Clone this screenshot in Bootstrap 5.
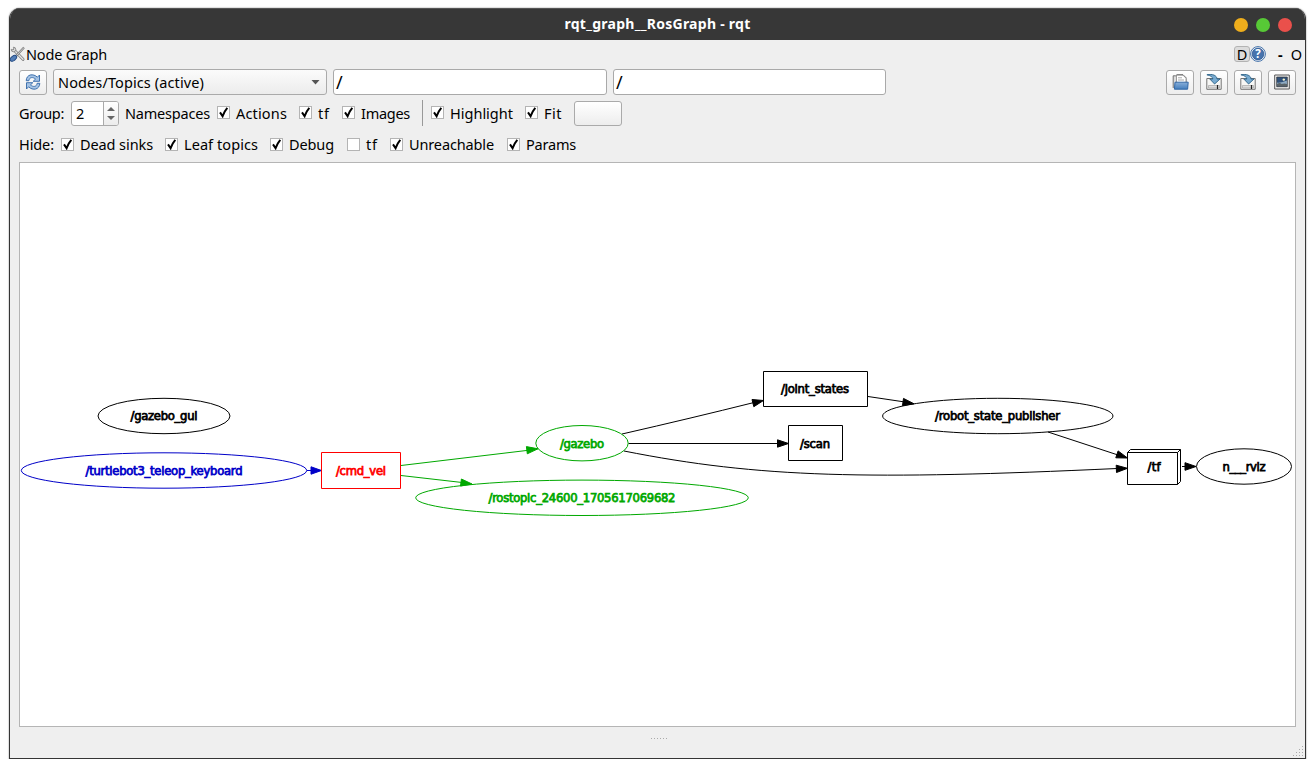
<!DOCTYPE html>
<html lang="en">
<head>
<meta charset="utf-8">
<title>rqt_graph__RosGraph - rqt</title>
<link href="https://cdn.jsdelivr.net/npm/bootstrap@5.3.0/dist/css/bootstrap.min.css" rel="stylesheet">
<style>
body{background:#fff;overflow:hidden;font-family:"Noto Sans",sans-serif;font-size:14.5px;line-height:20px;color:#000}
.window{width:1297px;height:751px;margin:8px 0 0 9px;background:#efefef;border:1px solid #353535;border-top:0;border-radius:11px 11px 0 0;box-shadow:0 0 1px 1px #ddd;overflow:hidden}
.titlebar{height:32px;background:#373737;border-top:1px solid #555;color:#fff;font-weight:700;font-size:14px;padding:0 13px}
.titlebar .side{width:58px}
.titlebar .fit{margin-bottom:2px}
.dot{width:14px;height:14px;border-radius:50%}
.dockbar{height:29px;padding:0 3px 2px 0}
.tools{height:26px;padding:0 9px;gap:6px}
.filters{height:26px;padding-left:9px;margin-top:5px}
.filters .tick{padding-bottom:1px}
.hides{height:26px;padding-left:9px;margin-top:5px}
.qbtn{height:25px;width:28px;padding:0;border:1px solid #aaa;border-radius:3px;background:linear-gradient(#fff,#ededed)}
.qfield{height:26px;border:1px solid #a9a9a9;border-radius:3px;padding:0 2px;background:#fff;font-size:18px}
.qselect{width:274px;height:26px;border:1px solid #aaa;border-radius:3px;background:linear-gradient(#fbfbfb,#ececec);padding:0 6px 0 4px}
.spin{width:48px;height:25px;border:1px solid #aaa;border-radius:3px;background:#fff;overflow:hidden;padding-left:4px}
.spin .arrows{width:15px;height:100%;border-left:1px solid #aaa;background:linear-gradient(#fff,#ececec)}
.tick{gap:6px}
.tick i{width:13px;height:13px;border:1px solid #b4b4b4;background:#fff;display:flex;flex:none}
.fit{white-space:nowrap;display:inline-block}
.divider{width:1px;height:26px;background:#999}
.canvas{width:1277px;height:565px;border:1px solid #b5b5b5;background:#fff;margin:5px 0 0 9px}
.canvas text{font-family:"DejaVu Sans",sans-serif;font-size:11.6px;text-anchor:middle;stroke-width:.75px}
.foot{height:31px}
</style>
</head>
<body>
<svg width="0" height="0" class="position-absolute">
<defs>
<path id="check" d="M2 5.4 4.6 9.2 Q6.5 4 9.3 .8" fill="none" stroke="#000" stroke-width="2"/>
<linearGradient id="blue" x2="0" y2="1"><stop stop-color="#89afd9"/><stop offset="1" stop-color="#447ebd"/></linearGradient>
<g id="save"><path d="M.8 4.5h14.4v10.8H.8z" fill="#f7f7f5" stroke="#747474"/><path d="M2.5 11.5h11v2.5h-11z" fill="#ddd" stroke="#999" stroke-width=".6"/><path d="M11.5 11v4" stroke="#222" stroke-width="1.2"/><path d="M.9.8C6.6-.5 11 1.6 11 5h3L8.6 10 3.8 5h3C6.8 3 4.4 1.5.9.8Z" fill="#76a9cf" stroke="#2d6389" stroke-width=".9"/></g>
</defs>
</svg>
<main class="window">
<header class="titlebar d-flex align-items-center justify-content-between">
<span class="side"></span><span class="fit" data-w="186">rqt_graph__RosGraph - rqt</span>
<span class="side d-flex gap-2"><i class="dot" style="background:#efae1c"></i><i class="dot" style="background:#57c936"></i><i class="dot" style="background:#ea504b"></i></span>
</header>
<section class="dockbar d-flex align-items-center">
<svg width="16" height="16" viewBox="0 0 16 16"><path d="M4 4 13 13.3" stroke="#808080" stroke-width="3" stroke-linecap="round"/><path d="M4 4 13 13.3" stroke="#e3e3e3" stroke-width="1.4" stroke-linecap="round"/><path d="M3.3 1.2A2.3 2.3 0 1 1 1.2 3.3L3 4 4 3Z" fill="#ddd" stroke="#888" stroke-width=".9"/><path d="M14 1.5 6 10" stroke="#777" stroke-width="2.1"/><path d="M14 1.5 6 10" stroke="#ddd" stroke-width=".9"/><ellipse cx="3.4" cy="12.3" rx="3.8" ry="2.2" transform="rotate(-38 3.4 12.3)" fill="#547fb8" stroke="#234a82"/></svg>
<span class="fit" data-w="81">Node Graph</span>
<span class="ms-auto d-flex align-items-center"><b class="fw-normal d-flex align-items-center justify-content-center" style="width:16px;height:16px;background:#dcdcdc;border:1px solid #b3b3b3;border-radius:3px">D</b>
<svg width="16" height="16" viewBox="0 0 16 16"><circle cx="8" cy="8" r="7.4" fill="#fff" stroke="#416fa7"/><circle cx="8" cy="8" r="5.9" fill="#4773ad" stroke="#214f8c" stroke-width=".7"/><text x="8" y="12" text-anchor="middle" font-size="11.5" font-weight="700" fill="#fff">?</text></svg>
<span style="margin-left:12px;font-weight:700">-</span><span style="margin-left:8px">O</span></span>
</section>
<section class="tools d-flex align-items-center">
<button class="qbtn d-flex align-items-center justify-content-center"><svg width="16" height="16" viewBox="0 0 16 16"><g id="turn" fill="#a5c3e5" stroke="#3167a7" stroke-width=".9"><path d="M1.2 6.7C1.5.1 8.3-.8 12.4 3.2L14.5 1v6.3H8.2l2.3-2.2C7.8 2.7 4.4 3 3.9 6.7Z"/></g><use href="#turn" transform="rotate(180 8 8)"/></svg></button>
<div class="qselect d-flex align-items-center justify-content-between"><span class="fit" data-w="146">Nodes/Topics (active)</span><svg width="9" height="5"><path d="M.5 0h8L4.5 4.5Z" fill="#555"/></svg></div>
<div class="qfield d-flex align-items-center" style="width:274px">/</div>
<div class="qfield d-flex align-items-center" style="width:273px">/</div>
<div class="d-flex ms-auto" style="gap:6px">
<button class="qbtn d-flex align-items-center justify-content-center"><svg width="17" height="16" viewBox="0 0 17 16"><path d="M1.2 14V1.8h2.6L5 .7h6l3 3V10" fill="#ddd" stroke="#737373"/><path d="M4.5 1.2h6.5l3 3V10H4.5z" fill="#fff" stroke="#777" stroke-width=".7"/><path d="M6 3.8h4M6 6h6" stroke="#aaa"/><path d="M3 8.2h13.2l-.6 7H2.4Z" fill="url(#blue)" stroke="#3267a6"/></svg></button>
<button class="qbtn d-flex align-items-center justify-content-center"><svg width="16" height="16"><use href="#save"/></svg></button>
<button class="qbtn d-flex align-items-center justify-content-center"><svg width="16" height="16"><use href="#save"/></svg></button>
<button class="qbtn d-flex align-items-center justify-content-center"><svg width="16" height="16" viewBox="0 0 16 16"><path d="M.7 1h14.6v14H.7z" fill="#f3f3f3" stroke="#555"/><path d="M2.7 3h10.6v9.7H2.7z" fill="#2f5079" stroke="#333" stroke-width=".7"/><path d="M3.1 8.6Q8 9 12.9 6.6v3.6H3.1z" fill="#8eabc4"/><path d="M3.1 10q2.5-2 4.5 0 3-1 5.3 0v2.3H3.1z" fill="#5b6468"/><circle cx="9.8" cy="5.6" r="1.2" fill="#f6f4c9"/></svg></button>
</div>
</section>
<section class="filters d-flex align-items-center">
<span style="width:52px"><span class="fit" data-w="45">Group:</span></span>
<div class="spin d-flex align-items-center justify-content-between">2<span class="arrows d-flex flex-column align-items-center justify-content-center" style="gap:5px"><svg width="8" height="4"><path d="M0 4h8L4 0Z" fill="#666"/></svg><svg width="8" height="4"><path d="M0 0h8L4 4Z" fill="#666"/></svg></span></div>
<span style="margin-left:6px;width:92px"><span class="fit" data-w="85">Namespaces</span></span>
<label class="tick d-flex align-items-center" style="width:82px"><i><svg width="11" height="11"><use href="#check"/></svg></i><span class="fit" data-w="51">Actions</span></label>
<label class="tick d-flex align-items-center" style="width:43px"><i><svg width="11" height="11"><use href="#check"/></svg></i><span class="fit" data-w="12">tf</span></label>
<label class="tick d-flex align-items-center" style="width:80px"><i><svg width="11" height="11"><use href="#check"/></svg></i><span class="fit" data-w="49">Images</span></label>
<span class="divider"></span>
<label class="tick d-flex align-items-center" style="width:94px;margin-left:8px"><i><svg width="11" height="11"><use href="#check"/></svg></i><span class="fit" data-w="63">Highlight</span></label>
<label class="tick d-flex align-items-center" style="width:49px"><i><svg width="11" height="11"><use href="#check"/></svg></i><span class="fit" data-w="18">Fit</span></label>
<button class="qbtn" style="width:48px" aria-label="Color"></button>
</section>
<section class="hides d-flex align-items-center">
<span style="width:42px"><span class="fit" data-w="35">Hide:</span></span>
<label class="tick d-flex align-items-center" style="width:104px"><i><svg width="11" height="11"><use href="#check"/></svg></i><span class="fit" data-w="73">Dead sinks</span></label>
<label class="tick d-flex align-items-center" style="width:105px"><i><svg width="11" height="11"><use href="#check"/></svg></i><span class="fit" data-w="74">Leaf topics</span></label>
<label class="tick d-flex align-items-center" style="width:77px"><i><svg width="11" height="11"><use href="#check"/></svg></i><span class="fit" data-w="45">Debug</span></label>
<label class="tick d-flex align-items-center" style="width:43px"><i></i><span class="fit" data-w="12">tf</span></label>
<label class="tick d-flex align-items-center" style="width:117px"><i><svg width="11" height="11"><use href="#check"/></svg></i><span class="fit" data-w="85">Unreachable</span></label>
<label class="tick d-flex align-items-center"><i><svg width="11" height="11"><use href="#check"/></svg></i><span class="fit" data-w="50">Params</span></label>
</section>
<section class="canvas">
<svg class="d-block" width="1275" height="563" viewBox="20 163 1275 563" fill="none" stroke-width="1">
<g stroke="#000">
<ellipse cx="164" cy="416" rx="66" ry="17.7"/><ellipse cx="997.8" cy="416" rx="115.2" ry="17.7"/><ellipse cx="1244" cy="466.5" rx="47.5" ry="17.7"/>
<path d="M763.5 371.5h104v35h-104zM788.5 425.5h54v35h-54zM1127.5 452.5h50v32h-50zM1127.5 452.5l3-3h50v32l-3 3M1177.5 452.5l3-3"/>
<path d="M622 434Q692 418 754 402.5M628.5 443.5H779M624 451C760 478 868 480 1117 468.5M868 396.5 905 402M1048 432 1118 455M1182 466.5h4"/>
<g fill="#000"><path d="M763.5 400.5l-9.7 6.2-1.8-7.2zM788.5 443.5l-11 3.7v-7.4zM914 403.8l-11.5 1.8 1-7.2zM1127.5 458l-11.7-.2 2.3-6.9zM1127.5 468.3l-11 4.2-.3-7.3zM1196 466.5l-11 3.8v-7.6z"/></g>
</g>
<g stroke="#0000c8"><ellipse cx="164" cy="470.5" rx="142.7" ry="17.7"/><path d="M307 470.5h6"/><path d="M321.5 470.5l-10.5 3.7v-7.4z" fill="#0000c8"/></g>
<path d="M321.5 452.5h79v36h-79z" stroke="#f00"/>
<g stroke="#00a800"><ellipse cx="582" cy="443.2" rx="46.2" ry="17.7"/><ellipse cx="582" cy="497.8" rx="166.3" ry="17.7"/><path d="M401 465.5 529 450.2M401 475.5 463 482.6"/><path d="M538 448.8l-10.7 5-.9-7.2zM472 484l-11.5 2.1.9-7.1z" fill="#00a800"/></g>
<g fill="#000" stroke="#000">
<text x="164" y="420" textLength="67">/gazebo_gui</text><text x="815" y="393" textLength="68">/joint_states</text><text x="815" y="447.5" textLength="30">/scan</text><text x="997.5" y="420" textLength="125">/robot_state_publisher</text><text x="1154" y="471" textLength="13">/tf</text><text x="1244" y="471" textLength="43">n___rviz</text></g>
<text x="164" y="474.5" textLength="157" fill="#0000c8" stroke="#0000c8">/turtlebot3_teleop_keyboard</text>
<text x="361" y="474.5" textLength="50" fill="#f00" stroke="#f00">/cmd_vel</text>
<g fill="#00a800" stroke="#00a800"><text x="582" y="447.5" textLength="44">/gazebo</text><text x="582" y="502" textLength="187">/rostopic_24600_1705617069682</text></g>
</svg>
</section>
<footer class="foot d-flex justify-content-end">
<svg class="d-block" width="1295" height="31" viewBox="10 727 1295 31" fill="#aaa"><path d="M651 738h1v1h-1zm3 0h1v1h-1zm3 0h1v1h-1zm3 0h1v1h-1zm3 0h1v1h-1zm3 0h1v1h-1zM1302 746h1v1h-1zm-3 3h1v1h-1zm3 0h1v1h-1zm-6 3h1v1h-1zm3 0h1v1h-1zm3 0h1v1h-1zm-9 3h1v1h-1zm3 0h1v1h-1zm3 0h1v1h-1zm3 0h1v1h-1z"/></svg>
</footer>
</main>
<script src="https://cdn.jsdelivr.net/npm/bootstrap@5.3.0/dist/js/bootstrap.bundle.min.js"></script>
<script>
document.querySelectorAll('.fit').forEach(function (el) {
  var w = el.getBoundingClientRect().width;
  el.style.letterSpacing = ((+el.dataset.w - w) / el.textContent.length) + 'px';
});
</script>
</body>
</html>
